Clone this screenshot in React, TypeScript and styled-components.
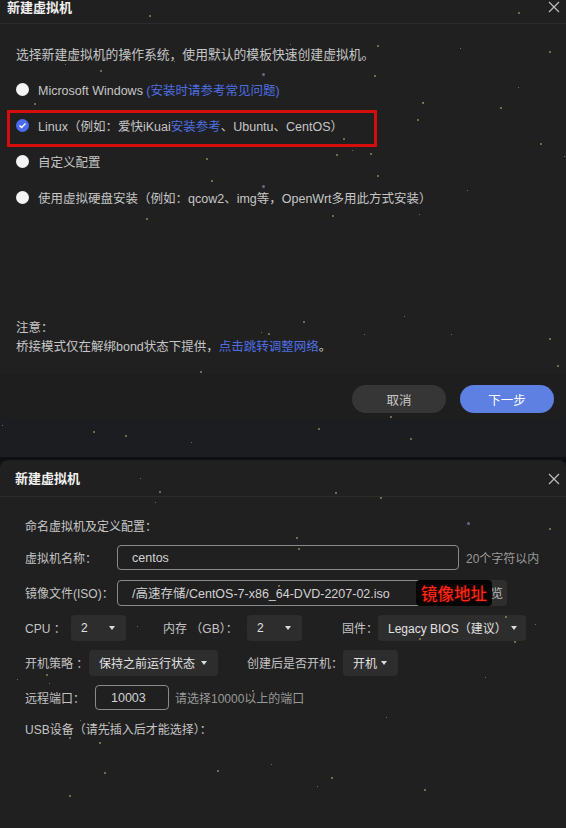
import React from "react";
import styled, { createGlobalStyle } from "styled-components";

const GlobalStyle = createGlobalStyle`
  html, body {
    margin: 0;
    padding: 0;
    background: #1c1d21;
  }
  body {
    font-family: "Liberation Sans", "Noto Sans CJK SC", sans-serif;
    color: #c8c8c8;
  }
`;

const Page = styled.div`
  position: relative;
  width: 566px;
  height: 828px;
  overflow: hidden;
  display: flex;
  flex-direction: column;
  background: #1c1d21;
`;

const Dialog = styled.div<{ $top?: boolean }>`
  display: flex;
  flex-direction: column;
  background: #202020;
  border-radius: ${(p) => (p.$top ? "0 0 8px 8px" : "8px 8px 0 0")};
  ${(p) => (p.$top ? "height: 419px;" : "flex: 1;")}
  overflow: hidden;
`;

const Header = styled.div<{ $h: number; $pad: number }>`
  height: ${(p) => p.$h}px;
  flex-shrink: 0;
  display: flex;
  align-items: ${(p) => (p.$h < 30 ? "flex-start" : "center")};
  justify-content: space-between;
  padding: 0 6px 0 ${(p) => p.$pad}px;
  border-bottom: 1px solid #2c2c2c;
`;

const Title = styled.div`
  font-size: 13px;
  font-weight: 700;
  color: #f0f0f0;
  line-height: 15px;
`;

const CloseIcon = styled.svg`
  width: 12px;
  height: 12px;
  margin-top: 1px;
`;

const Body = styled.div<{ $pad: number }>`
  flex: 1;
  display: flex;
  flex-direction: column;
  padding: 0 ${(p) => p.$pad}px;
`;

const Description = styled.div`
  margin-top: 22px;
  font-size: 12.8px;
  line-height: 18px;
  color: #c6c6c6;
`;

const Options = styled.div`
  margin-top: 7px;
  display: flex;
  flex-direction: column;
`;

const Option = styled.div`
  position: relative;
  height: 36px;
  display: flex;
  align-items: center;
  gap: 9px;
  font-size: 12.5px;
  color: #c6c6c6;
`;

const Radio = styled.span<{ $checked?: boolean }>`
  width: 13px;
  height: 13px;
  border-radius: 50%;
  background: ${(p) => (p.$checked ? "#4b6cf0" : "#f4f4f4")};
  display: flex;
  align-items: center;
  justify-content: center;
`;

const Link = styled.span`
  color: #4e6fe3;
`;

const Highlight = styled.div`
  position: absolute;
  left: -9px;
  top: 3px;
  width: 370px;
  height: 37px;
  box-sizing: border-box;
  border: 3px solid #d60d0d;
`;

const Notes = styled.div`
  margin-top: 104px;
  font-size: 12.5px;
  line-height: 19px;
  color: #c6c6c6;
`;

const Footer = styled.div`
  height: 45px;
  flex-shrink: 0;
  display: flex;
  justify-content: flex-end;
  align-items: flex-start;
  gap: 14px;
  padding: 11px 12px 0 0;
  box-sizing: border-box;
  background: #1e1e1e;
`;

const Button = styled.div<{ $primary?: boolean }>`
  width: 94px;
  height: 28px;
  border-radius: 14px;
  display: flex;
  align-items: center;
  justify-content: center;
  font-size: 12.5px;
  background: ${(p) => (p.$primary ? "#5e80e3" : "#363636")};
  color: ${(p) => (p.$primary ? "#ffffff" : "#c8c8c8")};
`;

const Gap = styled.div`
  height: 38px;
  flex-shrink: 0;
`;

const Behind = styled.div`
  flex: 1;
  display: flex;
  flex-direction: column;
  padding-top: 3px;
  background: #0e0f12;
`;

const Heading = styled.div`
  margin-top: 21px;
  font-size: 12px;
  line-height: 18px;
  color: #c8c8c8;
`;

const Rows = styled.div`
  margin-top: 9px;
  display: flex;
  flex-direction: column;
  gap: 10px;
`;

const Row = styled.div`
  position: relative;
  height: 25px;
  display: flex;
  align-items: center;
  font-size: 12px;
  color: #c4c4c4;
`;

const Label = styled.span<{ $w: number; $gap?: number }>`
  width: ${(p) => p.$w}px;
  margin-left: ${(p) => p.$gap || 0}px;
  flex-shrink: 0;
  white-space: nowrap;
`;

const Input = styled.div<{ $w: number; $pad?: number }>`
  width: ${(p) => p.$w}px;
  height: 25px;
  box-sizing: border-box;
  border: 1px solid #8a8a8a;
  border-radius: 4px;
  display: flex;
  align-items: center;
  padding-left: ${(p) => p.$pad ?? 14}px;
  color: #d2d2d2;
  font-size: 12.5px;
  white-space: nowrap;
  overflow: hidden;
`;

const FileGroup = styled.div`
  display: flex;
  height: 26px;
`;

const FileInput = styled(Input)`
  height: 26px;
  border-radius: 4px 0 0 4px;
`;

const Browse = styled.div`
  width: 52px;
  height: 26px;
  background: #2e2e2e;
  border-radius: 0 4px 4px 0;
  display: flex;
  align-items: center;
  justify-content: flex-end;
  padding-right: 4px;
  box-sizing: border-box;
  color: #bbb;
`;

const Annotation = styled.div`
  position: absolute;
  left: 391px;
  top: 0;
  width: 76px;
  height: 26px;
  border-radius: 4px;
  background: #050505;
  display: flex;
  align-items: center;
  justify-content: center;
  font-size: 16.5px;
  color: #ff2a10;
  text-shadow: 0 0 2px #b00000;
`;

const Select = styled.div<{ $w: number }>`
  width: ${(p) => p.$w}px;
  height: 26px;
  border-radius: 4px;
  background: #2d2d2d;
  display: flex;
  align-items: center;
  justify-content: space-between;
  gap: 4px;
  padding: 0 11px 0 10px;
  box-sizing: border-box;
  color: #e2e2e2;
  font-size: 12px;
  white-space: nowrap;
`;

const Caret = styled.span`
  flex-shrink: 0;
  width: 0;
  height: 0;
  border-left: 3.5px solid transparent;
  border-right: 3.5px solid transparent;
  border-top: 4px solid #dcdcdc;
`;

const Hint = styled.span<{ $gap: number }>`
  margin-left: ${(p) => p.$gap}px;
  color: #9a9a9a;
  font-size: 12px;
  white-space: nowrap;
`;

const Usb = styled.div`
  margin-top: 11px;
  font-size: 12px;
  line-height: 18px;
  color: #c4c4c4;
`;

const Star = styled.span<{ $s: number; $c: string }>`
  position: absolute;
  width: ${(p) => p.$s}px;
  height: ${(p) => p.$s}px;
  border-radius: 50%;
  background: ${(p) => p.$c};
  opacity: 0.7;
  pointer-events: none;
`;

const Y = "#b8b07a";
const B = "#8286bb";

const stars: [number, number, number, string][] = [
  [149, 15, 2, Y], [518, 12, 2, Y], [377, 45, 2, Y], [290, 44, 1, Y], [460, 48, 1, Y],
  [549, 51, 2, Y], [262, 73, 3, B], [374, 75, 2, Y], [65, 64, 1, Y], [100, 70, 2, Y],
  [174, 61, 1, Y], [518, 87, 1, Y], [422, 102, 2, Y], [500, 107, 2, Y], [34, 103, 2, Y],
  [423, 102, 1, Y], [417, 119, 2, Y], [343, 138, 2, Y], [540, 143, 2, Y],
  [336, 154, 2, Y], [352, 150, 1, Y], [370, 153, 2, Y], [206, 158, 2, Y], [564, 156, 1, Y],
  [211, 180, 2, Y], [377, 175, 2, Y], [262, 185, 3, B], [467, 190, 1, Y], [332, 215, 2, Y],
  [419, 214, 1, Y], [146, 218, 2, Y], [303, 321, 2, Y], [404, 316, 1, Y], [261, 332, 1, Y],
  [268, 333, 2, Y], [364, 334, 1, Y], [451, 334, 1, Y], [549, 338, 2, Y], [557, 365, 2, Y],
  [200, 371, 2, Y], [390, 416, 2, Y], [318, 428, 2, Y], [93, 431, 2, Y], [125, 435, 2, Y],
  [191, 442, 1, Y], [410, 438, 2, Y], [2, 425, 1, Y], [140, 478, 1, Y], [159, 491, 2, Y],
  [335, 492, 2, Y], [380, 497, 2, Y], [155, 502, 1, Y], [467, 522, 3, B], [549, 528, 2, Y],
  [296, 537, 2, Y], [298, 548, 2, Y], [278, 585, 2, Y], [137, 626, 1, Y], [419, 638, 2, Y],
  [505, 616, 2, Y], [535, 624, 1, Y], [514, 641, 2, Y], [46, 674, 2, Y], [49, 683, 1, Y],
  [17, 679, 1, Y], [252, 690, 2, Y], [485, 677, 1, Y], [386, 717, 1, Y], [80, 720, 1, Y],
  [108, 722, 2, Y], [69, 737, 2, Y], [99, 742, 2, Y], [271, 764, 1, Y], [217, 770, 2, Y],
  [104, 772, 2, Y], [331, 777, 2, Y], [317, 786, 1, Y], [424, 789, 2, Y], [69, 795, 2, Y],
];

const Close = () => (
  <CloseIcon viewBox="0 0 12 12">
    <path d="M1 1L11 11M11 1L1 11" stroke="#bdbdbd" strokeWidth="1.2" fill="none" />
  </CloseIcon>
);

const Check = () => (
  <svg width="9" height="9" viewBox="0 0 9 9">
    <path d="M1.5 4.6L3.6 6.6L7.5 2.5" stroke="#fff" strokeWidth="1.4" fill="none" />
  </svg>
);

export default function App() {
  return (
    <>
      <GlobalStyle />
      <Page>
        <Dialog $top>
          <Header $h={23} $pad={7}>
            <Title>新建虚拟机</Title>
            <Close />
          </Header>
          <Body $pad={16}>
            <Description>选择新建虚拟机的操作系统，使用默认的模板快速创建虚拟机。</Description>
            <Options>
              <Option>
                <Radio />
                <span>
                  Microsoft Windows <Link>(安装时请参考常见问题)</Link>
                </span>
              </Option>
              <Option>
                <Radio $checked>
                  <Check />
                </Radio>
                <span>
                  Linux（例如：爱快iKuai<Link>安装参考</Link>、Ubuntu、CentOS）
                </span>
                <Highlight />
              </Option>
              <Option>
                <Radio />
                <span>自定义配置</span>
              </Option>
              <Option>
                <Radio />
                <span>使用虚拟硬盘安装（例如：qcow2、img等，OpenWrt多用此方式安装）</span>
              </Option>
            </Options>
            <Notes>
              注意：
              <br />
              桥接模式仅在解绑bond状态下提供，<Link>点击跳转调整网络</Link>。
            </Notes>
          </Body>
          <Footer>
            <Button>取消</Button>
            <Button $primary>下一步</Button>
          </Footer>
        </Dialog>
        <Gap />
        <Behind>
          <Dialog>
            <Header $h={36} $pad={15}>
              <Title>新建虚拟机</Title>
              <Close />
            </Header>
            <Body $pad={25}>
              <Heading>命名虚拟机及定义配置：</Heading>
              <Rows>
                <Row>
                  <Label $w={92}>虚拟机名称：</Label>
                  <Input $w={342}>centos</Input>
                  <Hint $gap={7}>20个字符以内</Hint>
                </Row>
                <Row>
                  <Label $w={92}>镜像文件(ISO)：</Label>
                  <FileGroup>
                    <FileInput $w={338}>/高速存储/CentOS-7-x86_64-DVD-2207-02.iso</FileInput>
                    <Browse>浏览</Browse>
                  </FileGroup>
                  <Annotation>镜像地址</Annotation>
                </Row>
                <Row>
                  <Label $w={46}>CPU ：</Label>
                  <Select $w={55}>
                    2<Caret />
                  </Select>
                  <Label $w={84} $gap={37}>内存 （GB）：</Label>
                  <Select $w={55}>
                    2<Caret />
                  </Select>
                  <Label $w={36} $gap={40}>固件：</Label>
                  <Select $w={148}>
                    Legacy BIOS（建议）<Caret />
                  </Select>
                </Row>
                <Row>
                  <Label $w={64}>开机策略 ：</Label>
                  <Select $w={129}>
                    保持之前运行状态<Caret />
                  </Select>
                  <Label $w={96} $gap={29}>创建后是否开机：</Label>
                  <Select $w={55}>
                    开机<Caret />
                  </Select>
                </Row>
                <Row>
                  <Label $w={70}>远程端口：</Label>
                  <Input $w={74} $pad={15}>10003</Input>
                  <Hint $gap={6}>请选择10000以上的端口</Hint>
                </Row>
              </Rows>
              <Usb>USB设备（请先插入后才能选择）：</Usb>
            </Body>
          </Dialog>
        </Behind>
        {stars.map(([x, y, s, c], i) => (
          <Star key={i} $s={s} $c={c} style={{ left: x, top: y }} />
        ))}
      </Page>
    </>
  );
}
